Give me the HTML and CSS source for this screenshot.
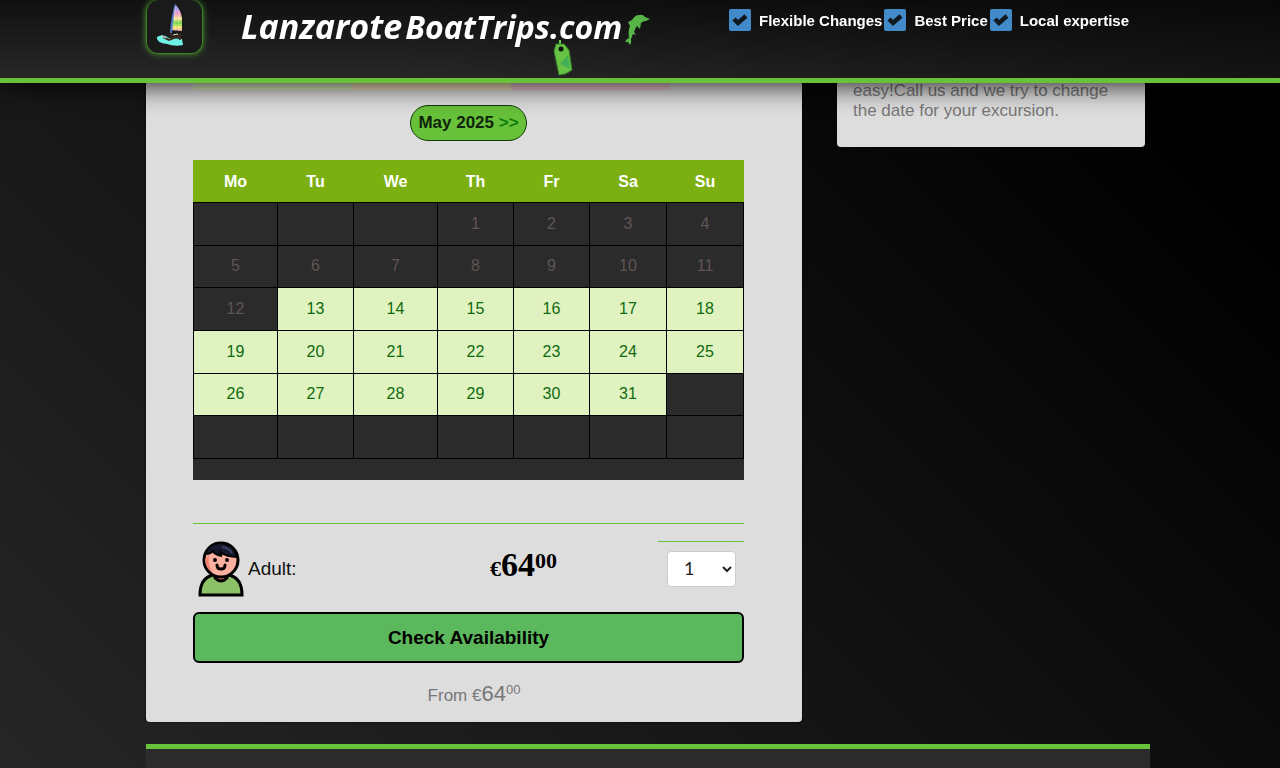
FILE: index.html
```html
<!DOCTYPE html>
<html lang="en">
<head>
    <meta charset="UTF-8">
    <meta name="viewport" content="width=device-width, initial-scale=1.0">
    <title>Lanzarote Boat Trips</title>
    <link rel="stylesheet" href="styles.css">
</head>
<body>
    <header class="topbar">
        <div class="container topbar-inner">
            <a class="badge" href="#" aria-label="Home">
                <svg width="30" height="44" viewBox="0 0 30 44">
                    <defs>
                        <linearGradient id="sail" x1="0" y1="0" x2="0" y2="1">
                            <stop offset="0" stop-color="#6f8fe0"/>
                            <stop offset="0.2" stop-color="#b9a3e8"/>
                            <stop offset="0.35" stop-color="#f09ac8"/>
                            <stop offset="0.55" stop-color="#f5e08a"/>
                            <stop offset="0.72" stop-color="#62cf3a"/>
                            <stop offset="0.85" stop-color="#f0ec6a"/>
                            <stop offset="1" stop-color="#f3a9b0"/>
                        </linearGradient>
                    </defs>
                    <path d="M2 35 Q8 31 14 36 L27 37 L28 43 Q20 45 12 42 Q1 41 2 35Z" fill="#6ff0e6"/>
                    <path d="M20 2 Q26 8 27 16 L27 29 L16 28 Z" fill="url(#sail)"/>
                    <path d="M20 2 Q16 14 15 31 L17 31 L19 12 Z" fill="#4f78c8"/>
                    <path d="M18 16h9M17 22h10M20 5v24M24 9v20" stroke="#fff" stroke-width="0.6" opacity="0.5"/>
                    <path d="M8 35l6 3 12-5M15 31l3 6M24 32l1 6" stroke="#3a2e22" stroke-width="2" fill="none"/>
                    <path d="M6 34l5 2M18 33l5-1" stroke="#f2e7d0" stroke-width="1"/>
                </svg>
            </a>
            <a class="logo" href="#">
                <span class="logo-first">Lanzarote</span><span>BoatTrips.com</span>
                <svg class="dolphin" width="26" height="32" viewBox="0 0 26 32">
                    <path d="M5 31 L3 28 L0 28 Q1 25 4 24 Q3 17 5 12 L3 8 L7 6 Q10 1 14 1 Q18 0 20 3 L25 5 L21 7 Q18 7 16 9 L15 15 L12 12 Q10 15 9 18 L11 21 L8 20 L6 25 Q7 28 5 31 Z" fill="#57b548"/>
                </svg>
                <svg class="tag" width="22" height="38" viewBox="0 0 22 38">
                    <path d="M8 1v7" stroke="#72cc50" stroke-width="2"/>
                    <path d="M4 5 L12 5 L17 11 L20 31 Q14 36 7 36 L2 12 Z" fill="#68c244" stroke="#327d2c"/>
                    <path d="M8 25 L16 16 L18 30 Z" fill="#45ae58"/>
                    <circle cx="9" cy="10" r="2.5" fill="#111"/>
                </svg>
            </a>
            <ul class="perks">
                <li>
                    <svg width="22" height="22" viewBox="0 0 22 22"><rect width="22" height="22" rx="2" fill="#428bca"/><path d="M5 10l4 4 8-7" fill="none" stroke="#101820" stroke-width="4.5"/></svg>
                    Flexible Changes
                </li>
                <li>
                    <svg width="22" height="22" viewBox="0 0 22 22"><rect width="22" height="22" rx="2" fill="#428bca"/><path d="M5 10l4 4 8-7" fill="none" stroke="#101820" stroke-width="4.5"/></svg>
                    Best Price
                </li>
                <li>
                    <svg width="22" height="22" viewBox="0 0 22 22"><rect width="22" height="22" rx="2" fill="#428bca"/><path d="M5 10l4 4 8-7" fill="none" stroke="#101820" stroke-width="4.5"/></svg>
                    Local expertise
                </li>
            </ul>
        </div>
    </header>

    <main class="container columns">
        <!-- Booking form -->
        <form class="booking">
            <div class="legend">
                <span class="legend-free"></span>
                <span class="legend-few"></span>
                <span class="legend-full"></span>
            </div>
            <button type="button" class="month">May 2025 <span>&gt;&gt;</span></button>

            <div class="calendar-box">
                <table class="calendar">
                    <colgroup>
                        <col class="wide"><col class="narrow"><col class="wide"><col class="narrow"><col class="narrow"><col class="medium"><col class="medium">
                    </colgroup>
                    <thead>
                        <tr><th>Mo</th><th>Tu</th><th>We</th><th>Th</th><th>Fr</th><th>Sa</th><th>Su</th></tr>
                    </thead>
                    <tbody>
                        <tr><td></td><td></td><td></td><td>1</td><td>2</td><td>3</td><td>4</td></tr>
                        <tr><td>5</td><td>6</td><td>7</td><td>8</td><td>9</td><td>10</td><td>11</td></tr>
                        <tr><td>12</td><td class="free">13</td><td class="free">14</td><td class="free">15</td><td class="free">16</td><td class="free">17</td><td class="free">18</td></tr>
                        <tr><td class="free">19</td><td class="free">20</td><td class="free">21</td><td class="free">22</td><td class="free">23</td><td class="free">24</td><td class="free">25</td></tr>
                        <tr><td class="free">26</td><td class="free">27</td><td class="free">28</td><td class="free">29</td><td class="free">30</td><td class="free">31</td><td></td></tr>
                        <tr><td></td><td></td><td></td><td></td><td></td><td></td><td></td></tr>
                    </tbody>
                </table>
            </div>

            <div class="person">
                <label class="person-type" for="adults">
                    <svg width="46" height="56" viewBox="0 0 46 56">
                        <path d="M2 54 Q2 37 15 34 L31 34 Q44 37 44 54 Z" fill="#8cc168" stroke="#000" stroke-width="3"/>
                        <path d="M17 33 V37 Q23 43 29 37 V33Z" fill="#e5786b" stroke="#000" stroke-width="3"/>
                        <circle cx="23" cy="19" r="17" fill="#fbb0a0" stroke="#000" stroke-width="3"/>
                        <path d="M11 14 Q9 24 15 32 Q7 27 7 18Z" fill="#f08070"/>
                        <path d="M8 11 Q12 2 23 2 Q36 3 39 16 Q29 16 22 11 Q22 14 24 15 Q17 14 15 10 Q12 13 8 13Z" fill="#16192c" stroke="#000" stroke-width="2"/>
                        <path d="M24 6 Q31 7 34 12" stroke="#3b4263" stroke-width="2" fill="none"/>
                        <circle cx="17" cy="19" r="2"/>
                        <circle cx="29" cy="19" r="2"/>
                        <path d="M19 24 Q19 28 23 28 Q27 28 27 24" fill="none" stroke="#000" stroke-width="3" stroke-linecap="round"/>
                    </svg>
                    Adult:
                </label>
                <div class="price">€<span>64</span><sup>00</sup></div>
                <div class="amount">
                    <select id="adults">
                        <option>0</option>
                        <option selected>1</option>
                        <option>2</option>
                        <option>3</option>
                        <option>4</option>
                    </select>
                </div>
            </div>

            <button type="submit" class="check">Check Availability</button>
            <p class="from">From €<span>64</span><sup>00</sup></p>
        </form>

        <aside class="note">easy!Call us and we try to change the date for your excursion.</aside>
    </main>

    <section class="container details"></section>
</body>
</html>
```
FILE: styles.css
```css
* {
    box-sizing: border-box;
}

body {
    display: flex;
    flex-direction: column;
    margin: 0;
    padding-left: 16px;
    min-height: 100vh;
    font-family: "Liberation Sans", Arial, sans-serif;
    font-size: 16px;
    background: linear-gradient(45deg, #262626, #000 90%);
}

.container {
    width: 100%;
    max-width: 1004px;
    margin: 0 auto;
}

/* Header */
.topbar {
    position: fixed;
    top: 0;
    left: 0;
    right: 0;
    z-index: 10;
    height: 83px;
    padding-left: 16px;
    border-bottom: 5px solid #67c23a;
    background: linear-gradient(to right, rgba(0, 0, 0, 0) 30%, rgba(0, 0, 0, 0.5)), linear-gradient(#101010, #282828);
    box-shadow: 0 0 30px #000;
}

.topbar-inner {
    display: flex;
    align-items: flex-start;
}

.badge {
    display: flex;
    align-items: flex-end;
    justify-content: center;
    width: 57px;
    height: 54px;
    padding-bottom: 7px;
    padding-right: 9px;
    border: 1px solid #3f7f28;
    border-top: none;
    border-radius: 12px;
    background: #1a1a1a;
    box-shadow: 0 0 6px #4c9a2e;
}

.logo {
    position: relative;
    display: flex;
    align-items: center;
    gap: 3px;
    margin-left: 38px;
    height: 52px;
    font-family: "Open Sans", "Noto Sans", sans-serif;
    font-size: 32px;
    font-style: italic;
    font-weight: 700;
    color: #fff;
    text-decoration: none;
}

.logo-first {
    font-size: 34px;
}

.dolphin {
    margin-top: 8px;
}

.tag {
    position: absolute;
    right: 77px;
    top: 39px;
}

.perks {
    display: flex;
    gap: 2px;
    margin: 9px 21px 0 auto;
    padding: 0;
    list-style: none;
    font-size: 15px;
    font-weight: bold;
    color: #fff;
    white-space: nowrap;
}

.perks li {
    display: flex;
    align-items: center;
    gap: 8px;
}

/* Page columns */
.columns {
    display: grid;
    grid-template-columns: 655fr 310fr;
    column-gap: 35px;
    align-items: start;
    padding: 81px 5px 0 0;
}

.booking {
    padding: 0 58px 14px 47px;
    border-radius: 4px;
    background: #ddd;
    box-shadow: 0 0 2px #000;
}

.legend {
    display: flex;
    height: 9px;
    margin-right: 74px;
}

.legend span {
    flex: 1;
}

.legend-free {
    background: #dff0c4;
}

.legend-few {
    background: #f7e3b8;
}

.legend-full {
    background: #ecc8d0;
}

.month {
    display: block;
    margin: 15px auto 19px;
    padding: 0 7px;
    height: 36px;
    border: 1px solid #123a08;
    border-radius: 18px;
    background: #67c23a;
    font-family: inherit;
    font-size: 17px;
    font-weight: bold;
    color: #10240a;
    cursor: pointer;
}

.month span {
    color: #0c7a0c;
}

/* Calendar */
.calendar-box {
    padding-bottom: 21px;
    background: #2b2b2b;
}

.calendar {
    width: 100%;
    height: 299px;
    border-collapse: collapse;
    table-layout: fixed;
    text-align: center;
}

.wide {
    width: 84px;
}

.narrow {
    width: 76px;
}

.medium {
    width: 77px;
}

.calendar th {
    height: 42px;
    padding: 0;
    border: 1px solid #7cb012;
    border-bottom-color: #000;
    background: #7cb012;
    color: #fff;
}

.calendar td {
    height: 42px;
    padding: 0;
    border: 1px solid #000;
    color: #5f5555;
}

.calendar .free {
    background: #dff2bf;
    color: #106b10;
    cursor: pointer;
}

/* Persons and price */
.person {
    display: grid;
    grid-template-columns: 1fr 136px 118px 86px;
    margin-top: 43px;
    padding-top: 17px;
    height: 89px;
    border-top: 1px solid #67c23a;
}

.person-type {
    display: flex;
    align-items: center;
    gap: 4px;
    height: 56px;
    padding-left: 5px;
    font-size: 19px;
    color: #111;
}

.price {
    grid-column: 2 / 4;
    padding-left: 86px;
    font-family: "Liberation Serif", serif;
    font-size: 22px;
    font-weight: bold;
    line-height: 48px;
}

.price span {
    font-size: 34px;
}

.price sup {
    font-size: 22px;
    line-height: 0;
}

.amount {
    height: 46px;
    padding: 9px 8px 0 9px;
    border-top: 1px solid #67c23a;
}

.amount select {
    width: 100%;
    height: 36px;
    padding-left: 12px;
    padding-bottom: 3px;
    border: 1px solid #ccc;
    border-radius: 4px;
    background: #fff;
    font-family: Lato, sans-serif;
    font-size: 18px;
    color: #222;
}

.check {
    display: block;
    width: 100%;
    height: 51px;
    border: 2px solid #000;
    border-radius: 6px;
    background: #5cb85c;
    font-family: inherit;
    font-size: 19px;
    font-weight: bold;
    color: #000;
    cursor: pointer;
}

.from {
    margin: 19px 0 0;
    padding-left: 11px;
    line-height: 24px;
    text-align: center;
    font-size: 17px;
    color: #777;
}

.from span {
    font-size: 22px;
}

.from sup {
    font-size: 13px;
    line-height: 0;
}

/* Sidebar */
.note {
    padding: 0 16px 26px;
    border-radius: 4px;
    background: #ddd;
    font-size: 17px;
    line-height: 20px;
    color: #777;
}

.details {
    flex: 1;
    margin-top: 22px;
    border-top: 5px solid #67c23a;
    background: #2b2b2b;
}
```
